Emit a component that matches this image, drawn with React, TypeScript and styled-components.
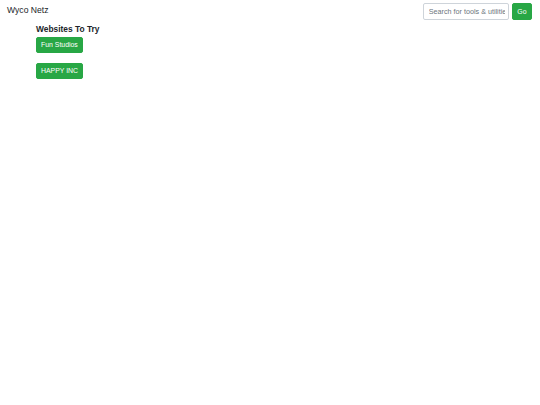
import React from 'react';
import styled, { createGlobalStyle } from 'styled-components';

const GlobalStyle = createGlobalStyle`
  html, body {
    margin: 0;
    padding: 0;
    background: #ffffff;
    font-family: "Liberation Sans", Arial, Helvetica, sans-serif;
    color: #212529;
  }
`;

const sites = ['Fun Studios', 'HAPPY INC'];

const App: React.FC = () => {
  return (
    <>
      <GlobalStyle />
      <NavBar>
        <Brand>Wyco Netz</Brand>
        <SearchForm onSubmit={e => e.preventDefault()}>
          <SearchInput type="text" placeholder="Search for tools & utilities" />
          <GreenButton type="submit" small>Go</GreenButton>
        </SearchForm>
      </NavBar>
      <Content>
        <Heading>Websites To Try</Heading>
        <SiteList>
          {sites.map(name => (
            <GreenButton key={name}>{name}</GreenButton>
          ))}
        </SiteList>
      </Content>
    </>
  );
};

const NavBar = styled.nav`
  display: flex;
  align-items: flex-start;
  justify-content: space-between;
  padding: 3px 8px 0 7px;
  height: 20px;
`;

const Brand = styled.a`
  font-size: 8.6px;
  line-height: 10px;
  margin-top: 1.5px;
  color: #212529;
  text-decoration: none;
`;

const SearchForm = styled.form`
  display: flex;
  gap: 3px;
  margin: 0;
`;

const SearchInput = styled.input`
  box-sizing: border-box;
  width: 86px;
  height: 17px;
  padding: 0 3px 0 5px;
  border: 1px solid #ced4da;
  border-radius: 2px;
  font-family: inherit;
  font-size: 7.2px;
  color: #495057;
  outline: none;

  &::placeholder {
    color: #6c757d;
  }
`;

const GreenButton = styled.button<{ small?: boolean }>`
  box-sizing: border-box;
  display: inline-block;
  height: ${p => (p.small ? '17px' : '16px')};
  padding: 0 ${p => (p.small ? '4.5px' : '4px')};
  border: 1px solid #28a745;
  border-radius: 2px;
  background: #28a745;
  color: #ffffff;
  font-family: inherit;
  font-size: 6.9px;
  line-height: 14px;
  cursor: pointer;
`;

const Content = styled.main`
  padding: 0 36px;
`;

const Heading = styled.h5`
  margin: 1px 0 3px;
  font-size: 8.4px;
  line-height: 10px;
  font-weight: bold;
`;

const SiteList = styled.div`
  display: flex;
  flex-direction: column;
  align-items: flex-start;
  gap: 10px;
`;

export default App;
